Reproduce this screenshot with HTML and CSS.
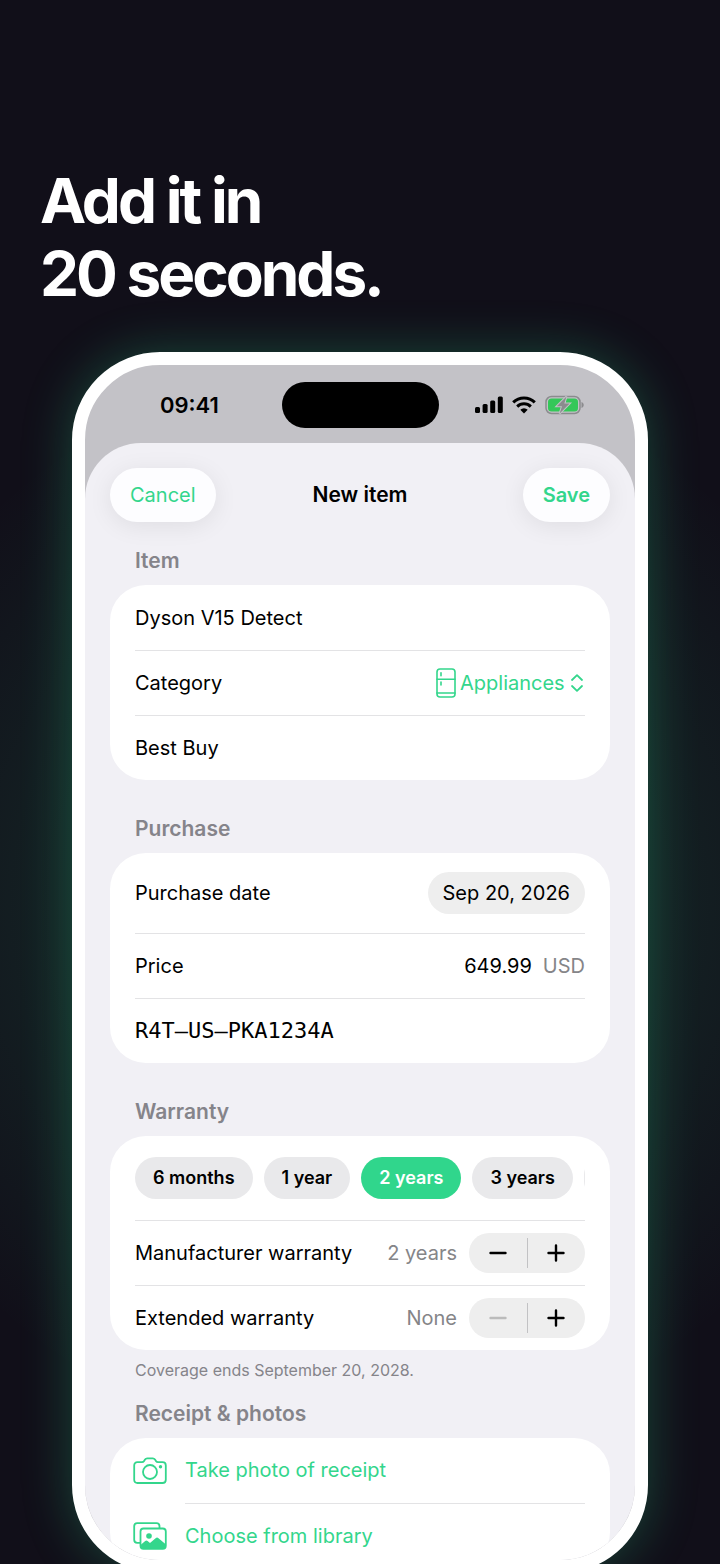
FILE: index.html
```
<!DOCTYPE html>
<html lang="en">

<head>
    <meta charset="UTF-8">
    <meta name="viewport" content="width=device-width, initial-scale=1.0">
    <title>Add it in 20 seconds</title>
    <link rel="stylesheet" href="styles.css">
</head>

<body>
    <main class="page">
        <h1>Add it in<br>20 seconds.</h1>

        <div class="phone">
            <div class="status-bar">
                <span class="time">09:41</span>
                <span class="island"></span>
                <span class="status-icons">
                    <svg width="28" height="18" viewBox="0 0 28 18" fill="#000">
                        <rect x="0" y="11" width="5" height="6" rx="1.5" />
                        <rect x="7.6" y="8" width="5" height="9" rx="1.5" />
                        <rect x="15.2" y="4.5" width="5" height="12.5" rx="1.5" />
                        <rect x="22.8" y="0.5" width="5" height="16.5" rx="1.5" />
                    </svg>
                    <svg width="24" height="18" viewBox="0 0 24 18" fill="none" stroke="#000" stroke-width="3">
                        <path d="M1.2 6.4a15.5 15.5 0 0 1 21.6 0" />
                        <path d="M5.2 10.6a9.6 9.6 0 0 1 13.6 0" />
                        <path d="M8.3 13.7a5.3 5.3 0 0 1 7.4 0L12 17.4z" fill="#000" stroke="none" />
                    </svg>
                    <svg width="39" height="20" viewBox="0 0 39 20">
                        <rect x="1" y="1.5" width="34" height="17" rx="5.5" fill="none" stroke="#8b8b8e" stroke-width="1.5" />
                        <rect x="3" y="3.5" width="30" height="13" rx="3.5" fill="#34c759" />
                        <path d="M36.5 7v6c1.4-.5 2.2-1.6 2.2-3s-.8-2.5-2.2-3z" fill="#8b8b8e" />
                        <path d="M21.5 1.5L11.8 11.2h5.2L14.6 18.5L24.6 8.6h-5.3z" fill="#8b8b8e" stroke="#c3c2c7" stroke-width="2" paint-order="stroke" />
                    </svg>
                </span>
            </div>

            <form class="sheet">
                <header class="nav">
                    <button type="button" class="nav-btn">Cancel</button>
                    <h2>New item</h2>
                    <button type="submit" class="nav-btn save">Save</button>
                </header>

                <section>
                    <h3>Item</h3>
                    <div class="card">
                        <div class="row">
                            <input type="text" value="Dyson V15 Detect" aria-label="Name">
                        </div>
                        <div class="row">
                            <label for="category">Category</label>
                            <div class="picker">
                                <svg width="20" height="30" viewBox="0 0 20 30" fill="none" stroke="currentColor" stroke-width="1.6" stroke-linecap="round">
                                    <rect x="1" y="1" width="18" height="28" rx="3" />
                                    <path d="M1 11.2h18M1 25h18M5 4.7v3M5 14v3" />
                                </svg>
                                <select id="category">
                                    <option>Appliances</option>
                                </select>
                                <svg class="chevrons" width="12" height="18" viewBox="0 0 12 18" fill="none" stroke="currentColor" stroke-width="1.8" stroke-linecap="round" stroke-linejoin="round">
                                    <path d="M1 6l5-4.8L11 6M1 12l5 4.8L11 12" />
                                </svg>
                            </div>
                        </div>
                        <div class="row">
                            <input type="text" value="Best Buy" aria-label="Store">
                        </div>
                    </div>
                </section>

                <section>
                    <h3>Purchase</h3>
                    <div class="card">
                        <div class="row tall">
                            <span>Purchase date</span>
                            <button type="button" class="date">Sep 20, 2026</button>
                        </div>
                        <div class="row">
                            <label for="price">Price</label>
                            <div class="price">
                                <input type="text" id="price" value="649.99">
                                <span class="muted">USD</span>
                            </div>
                        </div>
                        <div class="row">
                            <input type="text" class="serial" value="R4T–US–PKA1234A" aria-label="Serial number">
                        </div>
                    </div>
                </section>

                <section>
                    <h3>Warranty</h3>
                    <div class="card">
                        <div class="row chips">
                            <button type="button" class="chip">6 months</button>
                            <button type="button" class="chip">1 year</button>
                            <button type="button" class="chip active">2 years</button>
                            <button type="button" class="chip">3 years</button>
                            <button type="button" class="chip" aria-label="5 years"></button>
                        </div>
                        <div class="row">
                            <span>Manufacturer warranty</span>
                            <div class="amount">
                                <span class="muted">2 years</span>
                                <div class="stepper">
                                    <button type="button" aria-label="Decrease">
                                        <svg width="18" height="18" viewBox="0 0 18 18"><path d="M1.5 9h15" /></svg>
                                    </button>
                                    <button type="button" aria-label="Increase">
                                        <svg width="18" height="18" viewBox="0 0 18 18"><path d="M1.5 9h15M9 1.5v15" /></svg>
                                    </button>
                                </div>
                            </div>
                        </div>
                        <div class="row">
                            <span>Extended warranty</span>
                            <div class="amount">
                                <span class="muted">None</span>
                                <div class="stepper">
                                    <button type="button" aria-label="Decrease" disabled>
                                        <svg width="18" height="18" viewBox="0 0 18 18"><path d="M1.5 9h15" /></svg>
                                    </button>
                                    <button type="button" aria-label="Increase">
                                        <svg width="18" height="18" viewBox="0 0 18 18"><path d="M1.5 9h15M9 1.5v15" /></svg>
                                    </button>
                                </div>
                            </div>
                        </div>
                    </div>
                    <p class="note">Coverage ends September 20, 2028.</p>
                </section>

                <section>
                    <h3>Receipt &amp; photos</h3>
                    <div class="card">
                        <button type="button" class="action">
                            <svg width="34" height="28" viewBox="0 0 34 28" fill="none" stroke="currentColor" stroke-width="1.8">
                                <path d="M4.5 5.2H9c1 0 1.5-.3 2.1-1.2l.9-1.4c.6-.9 1.2-1.2 2.2-1.2h5.6c1 0 1.6.3 2.2 1.2l.9 1.4c.6.9 1.1 1.2 2.1 1.2h4.5c2.2 0 3.3 1.1 3.3 3.3v14.2c0 2.2-1.1 3.3-3.3 3.3h-25c-2.2 0-3.3-1.1-3.3-3.3V8.5c0-2.2 1.1-3.3 3.3-3.3z" />
                                <circle cx="17" cy="15" r="7" />
                                <circle cx="27.5" cy="9.8" r="1.7" fill="currentColor" stroke="none" />
                            </svg>
                            <span>Take photo of receipt</span>
                        </button>
                        <button type="button" class="action">
                            <svg width="34" height="28" viewBox="0 0 34 28" fill="none" stroke="currentColor" stroke-width="1.8">
                                <path d="M26.5 6V4.2c0-2-1-3-3-3H4.2c-2 0-3 1-3 3v13.6c0 2 1 3 3 3h3" />
                                <rect x="7.5" y="6.5" width="25.3" height="20.3" rx="3" />
                                <circle cx="16" cy="14" r="2.8" fill="currentColor" stroke="none" />
                                <path d="M7.5 23l4.7-4c.8-.7 1.6-.7 2.4 0l2.4 2 5.6-4.8c1-.8 1.9-.8 2.9 0l7.2 6v1.6c0 2-1 3-3 3H10.5c-2 0-3-1-3-3z" fill="currentColor" stroke="none" />
                            </svg>
                            <span>Choose from library</span>
                        </button>
                    </div>
                </section>
            </form>
        </div>
    </main>
</body>

</html>
```
FILE: styles.css
```
* {
    box-sizing: border-box;
    margin: 0;
    padding: 0;
}

body {
    background-color: #110f19;
    color: #000;
    font-family: Inter, sans-serif;
    font-size: 20px;
    line-height: 26px;
}

.page {
    height: 100vh;
    overflow: hidden;
    padding: 164px 10% 0;
    background: radial-gradient(ellipse 75% 35% at 50% 58%, rgba(48, 215, 140, 0.2), transparent);
}

h1 {
    margin: 0 -32px 42px;
    color: #fff;
    font-size: 62px;
    line-height: 73px;
    font-weight: 700;
    letter-spacing: -3px;
}

/* Phone */
.phone {
    height: 1221px;
    overflow: hidden;
    border: 13px solid #fff;
    border-radius: 88px;
    background-color: #c3c2c7;
    box-shadow: 0 0 50px rgba(48, 215, 140, 0.28);
}

.status-bar {
    display: grid;
    grid-template-columns: 1fr auto 1fr;
    align-items: center;
    height: 78px;
    padding: 2px 51px 0;
}

.time {
    margin-left: 24px;
    font-size: 22px;
    font-weight: 600;
}

.island {
    width: 157px;
    height: 46px;
    border-radius: 23px;
    background-color: #000;
}

.status-icons {
    display: flex;
    justify-content: flex-end;
    align-items: center;
    gap: 9px;
}

/* Form sheet */
.sheet {
    min-height: 100%;
    padding: 25px 25px 0;
    border-radius: 56px 56px 0 0;
    background-color: #f1f0f5;
}

button,
input,
select {
    border: none;
    background: none;
    color: inherit;
    font: inherit;
}

button {
    cursor: pointer;
}

.nav {
    display: grid;
    grid-template-columns: 1fr auto 1fr;
    align-items: center;
}

.nav h2 {
    font-size: 21px;
    font-weight: 600;
}

.nav-btn {
    justify-self: start;
    height: 54px;
    padding: 0 20px;
    border-radius: 27px;
    background-color: #fdfdff;
    box-shadow: 0 4px 24px rgba(0, 0, 0, 0.08);
    color: #33d68c;
}

.nav-btn.save {
    justify-self: end;
    font-weight: 600;
}

h3 {
    padding: 36px 25px 11px;
    color: #85848a;
    font-size: 21px;
    font-weight: 600;
}

.nav + section h3 {
    padding-top: 26px;
}

section:last-child h3 {
    padding-top: 20px;
}

.card {
    padding: 0 25px;
    border-radius: 36px;
    background-color: #fff;
}

.row {
    display: flex;
    justify-content: space-between;
    align-items: center;
    height: 65px;
}

.row + .row {
    border-top: 1px solid #e3e3e5;
}

.row.tall {
    height: 80px;
}

.row > input {
    width: 100%;
}

.picker {
    display: flex;
    align-items: center;
    gap: 4px;
    color: #33d68c;
}

.picker select {
    appearance: none;
}

.chevrons {
    margin: 0 2px;
}

.date {
    height: 42px;
    padding: 0 15px;
    border-radius: 21px;
    background-color: #eee;
}

.price {
    display: flex;
    gap: 11px;
}

.price input {
    width: 100px;
    text-align: right;
}

.muted {
    color: #858588;
}

.row > .serial {
    font-family: "DejaVu Sans Mono", monospace;
    font-size: 22px;
}

.chips {
    justify-content: flex-start;
    gap: 11px;
    height: 84px;
    overflow: hidden;
}

.chip {
    flex-shrink: 0;
    height: 42px;
    padding: 0 18px;
    border-radius: 21px;
    background-color: #e9e9eb;
    font-size: 18px;
    font-weight: 600;
}

.chip.active {
    background-color: #30d68c;
    color: #fff;
}

.amount {
    display: flex;
    align-items: center;
    gap: 12px;
}

.stepper {
    display: flex;
    align-items: center;
    width: 116px;
    height: 40px;
    border-radius: 20px;
    background-color: #eee;
}

.stepper button {
    flex: 1;
    height: 30px;
}

.stepper button + button {
    border-left: 1px solid #c2c2c4;
}

.stepper svg {
    display: block;
    margin: 0 auto;
    stroke: #000;
    stroke-width: 2.4;
    stroke-linecap: round;
}

.stepper button:disabled svg {
    stroke: #bbb;
}

.note {
    padding: 9px 25px 0;
    color: #85848a;
    font-size: 16px;
    line-height: 22px;
}

.action {
    display: flex;
    align-items: center;
    gap: 18px;
    width: 100%;
    color: #33d68c;
    text-align: left;
}

.action svg {
    flex-shrink: 0;
    margin-left: -2px;
}

.action span {
    flex: 1;
    height: 65px;
    line-height: 65px;
}

.action + .action span {
    border-top: 1px solid #e3e3e5;
}
```
